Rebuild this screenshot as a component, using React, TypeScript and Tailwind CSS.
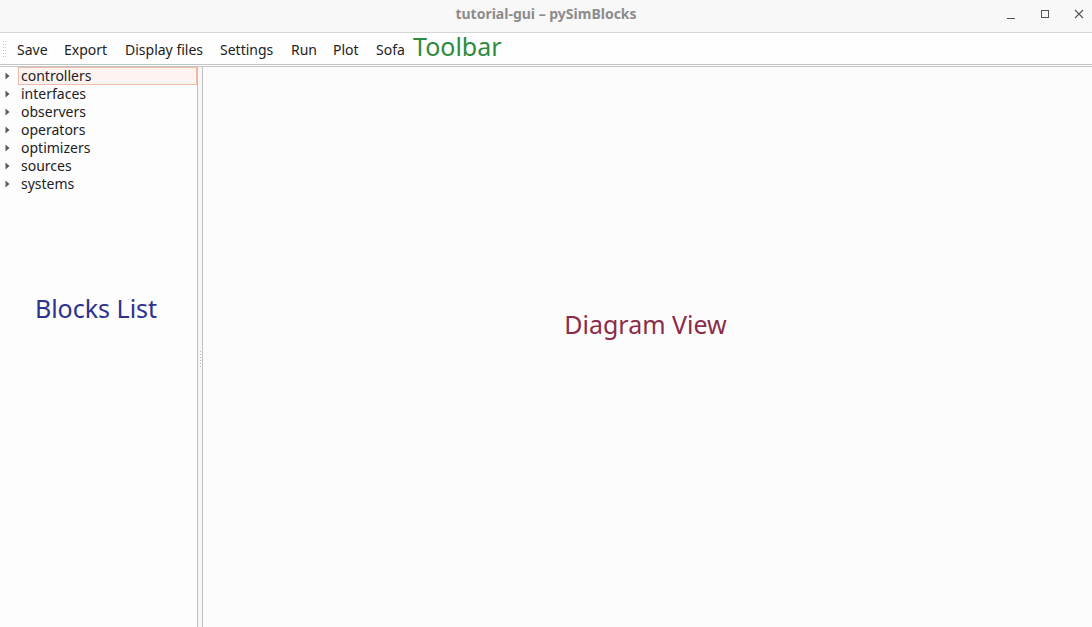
import React from "react";

const font = { fontFamily: '"Noto Sans", "Open Sans", sans-serif' };

function Arrow() {
  return (
    <svg width="5" height="8" viewBox="0 0 5 8" className="shrink-0">
      <path d="M0.5 0.5 L4.5 4 L0.5 7.5 Z" fill="#5a5a5a" />
    </svg>
  );
}

export default function App() {
  const items = [
    "controllers",
    "interfaces",
    "observers",
    "operators",
    "optimizers",
    "sources",
    "systems",
  ];
  const tools: [string, string][] = [
    ["Save", "w-[47px]"],
    ["Export", "w-[61px]"],
    ["Display files", "w-[95px]"],
    ["Settings", "w-[71px]"],
    ["Run", "w-[42px]"],
    ["Plot", "w-[43px]"],
    ["Sofa", "w-[37px]"],
  ];
  return (
    <div
      className="w-[1092px] h-[627px] flex flex-col bg-[#fafafa] overflow-hidden"
      style={font}
    >
      {/* Title bar */}
      <div className="h-[33px] shrink-0 bg-[#f8f8f8] border-b border-[#d4d4d4] flex items-center">
        <div className="w-[95px] shrink-0" />
        <div className="flex-1 text-center text-[14px] font-bold text-[#8c8c8c] leading-none pb-[4px]">
          tutorial-gui – pySimBlocks
        </div>
        <div className="w-[95px] shrink-0 flex items-center justify-end pr-[5px] gap-[18px] h-full pb-[4px]">
          <svg width="16" height="16" viewBox="0 0 16 16">
            <path d="M4 12.5 H12" stroke="#555" strokeWidth="1" />
          </svg>
          <svg width="16" height="16" viewBox="0 0 16 16">
            <rect x="4.5" y="4.5" width="7" height="7" fill="none" stroke="#555" strokeWidth="1" />
          </svg>
          <svg width="16" height="16" viewBox="0 0 16 16">
            <path d="M4 4 L12 12 M12 4 L4 12" stroke="#555" strokeWidth="1.1" />
          </svg>
        </div>
      </div>

      {/* Toolbar */}
      <div className="h-[32px] shrink-0 bg-[#fefefe] flex items-center border-b border-[#c4c4c4]">
        <div className="w-[17px] h-full flex items-center pl-[3px]">
          <div className="flex flex-col gap-[2px]">
            {[0, 1, 2, 3, 4, 5].map((i) => (
              <div key={i} className="flex gap-[1px]">
                <div className="w-[1px] h-[1px] bg-[#c8c8c8]" />
                <div className="w-[1px] h-[1px] bg-[#c8c8c8]" />
              </div>
            ))}
          </div>
        </div>
        {tools.map(([t, w]) => (
          <div key={t} className={`${w} text-[14px] text-[#222] whitespace-nowrap pt-[1px]`}>
            {t}
          </div>
        ))}
        <div className="text-[25px] text-[#2e8b3e] leading-none pb-[4px]">Toolbar</div>
      </div>
      <div className="h-[1px] shrink-0 bg-[#ffffff]" />

      {/* Content */}
      <div className="flex-1 flex border-t border-[#c4c4c4] min-h-0">
        <div className="w-[198px] shrink-0 bg-[#fdfdfd] border-r border-[#c2c2c2] flex flex-col">
          <div className="flex flex-col">
            {items.map((it, i) => (
              <div key={it} className="h-[18px] flex items-center">
                <div className="w-[18px] flex justify-center pl-[1px] pr-[4px]">
                  <Arrow />
                </div>
                <div
                  className={`flex-1 h-[18px] flex items-center pl-[2px] pb-[2px] text-[14px] text-[#222] ${
                    i === 0 ? "border border-[#f0b9a8] bg-[#fdf3f0]" : "border border-transparent"
                  }`}
                >
                  {it}
                </div>
              </div>
            ))}
          </div>
          <div className="mt-[97px] text-center text-[25px] text-[#2e3190] pr-[5px]">Blocks List</div>
        </div>
        <div className="w-[4px] shrink-0 bg-[#f7f7f7] flex flex-col items-center justify-center pt-[24px]">
          <div className="flex flex-col gap-[2px]">
            {[0, 1, 2, 3, 4, 5].map((i) => (
              <div key={i} className="w-[1px] h-[1px] bg-[#b8b8b8]" />
            ))}
          </div>
        </div>
        <div className="flex-1 bg-[#fcfcfc] border-l border-[#c2c2c2] flex items-center justify-center pb-[44px] pr-[4px]">
          <div className="text-[25px] text-[#8b2c48]">Diagram View</div>
        </div>
      </div>
    </div>
  );
}
